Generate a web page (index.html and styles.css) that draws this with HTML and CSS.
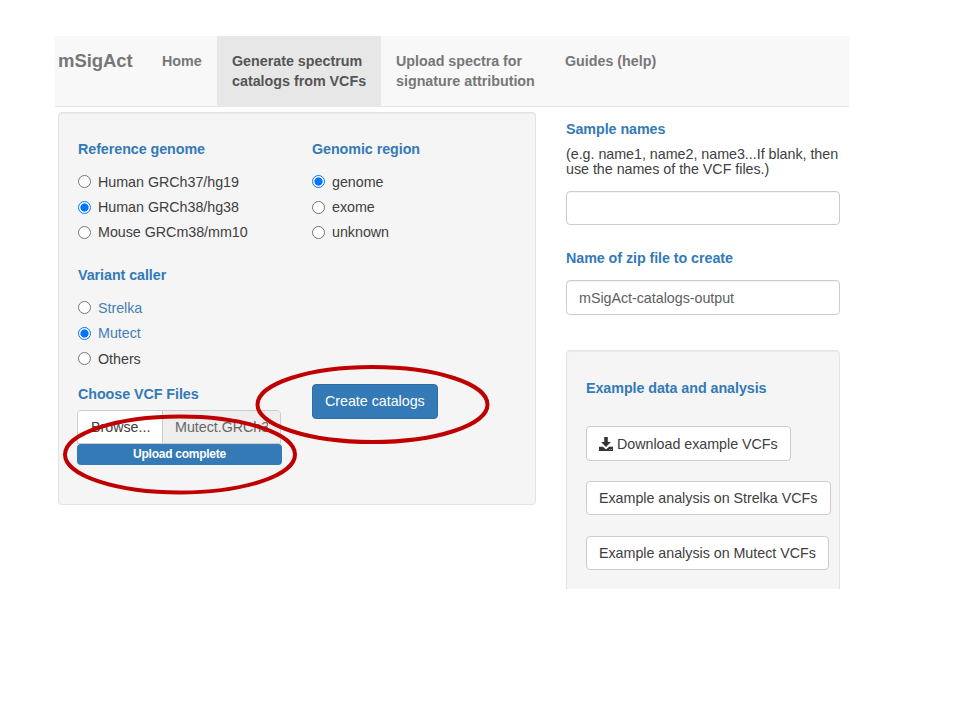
FILE: index.html
```html
<!DOCTYPE html>
<html lang="en">
<head>
<meta charset="utf-8">
<title>mSigAct</title>
<link rel="stylesheet" href="styles.css">
</head>
<body>
<div class="app">
  <nav class="navbar">
    <a class="brand">mSigAct</a>
    <a class="nav-item home">Home</a>
    <a class="nav-item active">Generate spectrum<br>catalogs from VCFs</a>
    <a class="nav-item upload">Upload spectra for<br>signature attribution</a>
    <a class="nav-item guides">Guides (help)</a>
  </nav>
  <main class="content">
    <section class="panel main-panel">
      <div class="col-left">
        <h2>Reference genome</h2>
        <div class="options">
          <label class="option"><i class="radio"></i><span>Human GRCh37/hg19</span></label>
          <label class="option"><i class="radio checked"></i><span>Human GRCh38/hg38</span></label>
          <label class="option"><i class="radio"></i><span>Mouse GRCm38/mm10</span></label>
        </div>
        <h2>Variant caller</h2>
        <div class="options caller">
          <label class="option link"><i class="radio"></i><span>Strelka</span></label>
          <label class="option link"><i class="radio checked"></i><span>Mutect</span></label>
          <label class="option"><i class="radio"></i><span>Others</span></label>
        </div>
        <h2 class="choose">Choose VCF Files</h2>
        <div class="file-group">
          <span class="browse">Browse...</span>
          <span class="filename"><span class="clip">Mutect.GRCh3</span></span>
        </div>
        <div class="progress">Upload complete</div>
      </div>
      <div class="col-right">
        <h2>Genomic region</h2>
        <div class="options">
          <label class="option"><i class="radio checked"></i><span>genome</span></label>
          <label class="option"><i class="radio"></i><span>exome</span></label>
          <label class="option"><i class="radio"></i><span>unknown</span></label>
        </div>
        <button class="btn primary">Create catalogs</button>
      </div>
    </section>
    <aside class="side">
      <h2>Sample names</h2>
      <p class="hint">(e.g. name1, name2, name3...If blank, then<br>use the names of the VCF files.)</p>
      <div class="input"></div>
      <h2 class="zip">Name of zip file to create</h2>
      <div class="input">mSigAct-catalogs-output</div>
      <section class="panel example">
        <h2>Example data and analysis</h2>
        <button class="btn download"><svg class="icon" viewBox="0 0 14 14"><path d="M5.200 0h3.600v5h3.100L7 9.900 2.100 5h3.100z"/><path d="M0 9.700h3.900L7 12.500l3.100-2.800H14V14H0z"/><path class="lights" d="M10.400 12.200h.8v.8h-.8zM12.200 12.200h.8v.8h-.8z"/></svg><span>Download example VCFs</span></button>
        <button class="btn strelka">Example analysis on Strelka VCFs</button>
        <button class="btn mutect">Example analysis on Mutect VCFs</button>
      </section>
    </aside>
  </main>
</div>
<svg class="marks" viewBox="0 0 960 720">
  <ellipse cx="372.500" cy="404.500" rx="115" ry="37.500"/>
  <ellipse cx="180" cy="454.500" rx="115" ry="38"/>
</svg>
</body>
</html>
```
FILE: styles.css
```css
* { box-sizing: border-box; }
body {
  margin: 0;
  width: 960px;
  height: 720px;
  overflow: hidden;
  background: #fff;
  color: #404040;
  font: 14.3px/20px "Liberation Sans", Arial, sans-serif;
  letter-spacing: -0.03px;
}
.app { width: 794px; margin: 36px 0 0 55px; height: 553px; overflow: hidden; }
.navbar {
  display: flex;
  height: 71px;
  background: #f8f8f8;
  border-bottom: 1px solid #e7e7e7;
  color: #777;
  font-weight: bold;
  letter-spacing: -0.01px;
  white-space: nowrap;
}
.brand { width: 92px; padding: 15px 0 0 3px; font-size: 18.5px; letter-spacing: -0.05px; }
.nav-item { padding: 15px 15px 0; line-height: 20.4px; }
.home { width: 70px; }
.active { width: 164px; background: #e7e7e7; color: #555; }
.upload { width: 169px; }
.content { display: flex; gap: 30px; padding: 5px 0 0 3px; }
.panel {
  background: #f5f5f5;
  border: 1px solid #e3e3e3;
  border-radius: 4px;
  box-shadow: inset 0 1px 1px rgba(0, 0, 0, 0.05);
}
.main-panel { display: flex; width: 478px; height: 393px; padding: 26px 19px 0; }
.col-left { width: 234px; }
h2 {
  margin: 0;
  font-size: 14.3px;
  line-height: 20px;
  color: #337ab7;
  letter-spacing: -0.06px;
  white-space: nowrap;
}
.options { padding: 10px 0 20px; }
.caller { padding-bottom: 13px; }
.option { display: flex; align-items: center; gap: 7px; height: 25.4px; }
.radio {
  width: 13px;
  height: 13px;
  border: 1px solid #767676;
  border-radius: 50%;
  background: #fff;
}
.checked { border-color: #0075ff; background: radial-gradient(circle, #0075ff 3.8px, #fff 4.4px); }
.link { color: #4580b5; }
.file-group {
  display: flex;
  width: 204px;
  height: 34px;
  margin: 6px 0 0 -1px;
  border: 1px solid #ccc;
  border-radius: 4px 4px 0 0;
  line-height: 33px;
  overflow: hidden;
}
.browse { width: 85px; padding-left: 13px; background: #fff; border-right: 1px solid #ccc; }
.filename { flex: 1; padding: 0 12px; background: #eee; color: #666; }
.clip { display: block; width: 93px; overflow: hidden; }
.progress {
  width: 205px;
  height: 21px;
  margin-left: -1px;
  border-radius: 4px;
  background: #337ab7;
  color: #fff;
  font-size: 12px;
  font-weight: bold;
  line-height: 20px;
  letter-spacing: -0.26px;
  text-align: center;
}
.btn {
  display: flex;
  align-items: center;
  height: 35px;
  padding: 0 12px;
  border: 1px solid #ccc;
  border-radius: 4px;
  background: #fff;
  color: #404040;
  font: inherit;
  letter-spacing: inherit;
  white-space: nowrap;
}
.primary { width: 126px; margin-top: 119px; padding-bottom: 1px; background: #337ab7; border-color: #2e6da4; color: #fff; }
.side { width: 274px; padding-top: 7px; }
.hint { margin: 8px 0 0; line-height: 15px; white-space: nowrap; }
.input {
  height: 34px;
  margin-top: 14px;
  padding-left: 12px;
  border: 1px solid #ccc;
  border-radius: 4px;
  box-shadow: inset 0 1px 1px rgba(0, 0, 0, 0.05);
  color: #606060;
  line-height: 33px;
}
.zip { margin: 23px 0 12px; }
.zip + .input { height: 35px; margin-top: 0; line-height: 34px; }
.example { height: 260px; margin-top: 35px; padding: 27px 19px 0; }
.download { width: 205px; margin-top: 28px; }
.strelka { width: 245px; height: 34px; margin-top: 20px; padding-bottom: 1px; }
.mutect { width: 243px; height: 34px; margin-top: 21px; }
.icon { width: 14px; height: 14px; margin-right: 4px; fill: #333; }
.lights { fill: #fff; }
.marks { position: absolute; left: 0; top: 0; width: 960px; height: 720px; fill: none; stroke: #c00000; stroke-width: 4; }
```
